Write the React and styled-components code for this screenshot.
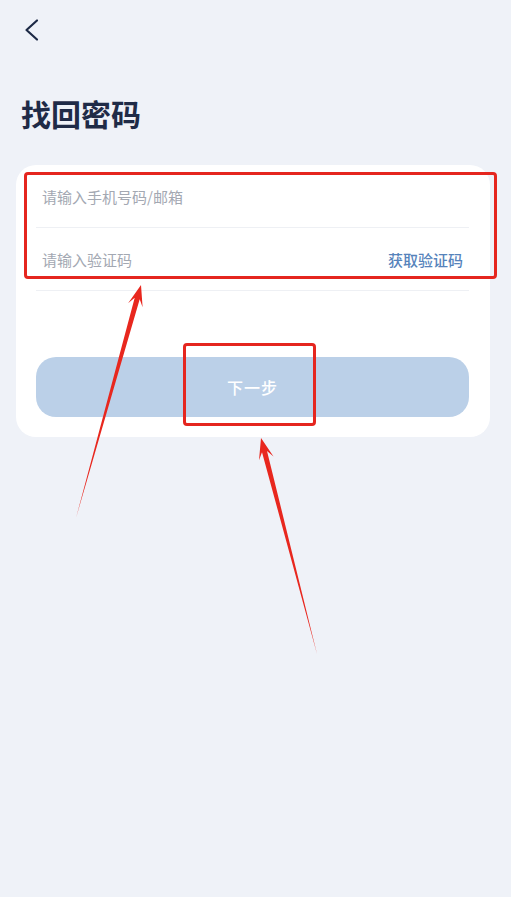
import React from "react";
import styled, { createGlobalStyle } from "styled-components";

const GlobalStyle = createGlobalStyle`
  html, body {
    margin: 0;
    padding: 0;
    background: #eff2f8;
  }
  * {
    box-sizing: border-box;
  }
`;

const Page = styled.div`
  position: relative;
  width: 511px;
  min-height: 897px;
  background: #eff2f8;
  font-family: "Noto Sans CJK SC", "Noto Sans", sans-serif;
  overflow: hidden;
`;

const TopBar = styled.div`
  height: 60px;
  display: flex;
  align-items: center;
  padding-left: 20px;
`;

const BackButton = styled.button`
  width: 24px;
  height: 24px;
  padding: 0;
  border: none;
  background: none;
  display: flex;
  align-items: center;
  justify-content: center;
  color: #1d2a46;
`;

const Title = styled.h1`
  margin: 32px 0 0 21px;
  font-size: 30px;
  line-height: 42px;
  font-weight: 700;
  color: #1f2b47;
`;

const Card = styled.div`
  margin: 31px 21px 0 16px;
  background: #fff;
  border-radius: 20px;
  padding: 0 21px 20px 20px;
`;

const FieldRow = styled.div`
  height: 63px;
  padding-top: 1px;
  display: flex;
  align-items: center;
  border-bottom: 1px solid #eef0f4;
`;

const Input = styled.input`
  flex: 1;
  min-width: 0;
  border: none;
  outline: none;
  background: transparent;
  padding: 0 0 0 6px;
  font-family: inherit;
  font-size: 15px;
  color: #1d2a46;

  &::placeholder {
    color: #a3a8b2;
  }
`;

const CodeLink = styled.span`
  margin-right: 6px;
  font-size: 15px;
  font-weight: 500;
  color: #5683bb;
`;

const SubmitButton = styled.button`
  display: block;
  width: 100%;
  height: 60px;
  margin-top: 66px;
  border: none;
  border-radius: 20px;
  background: #bbd0e8;
  color: #fff;
  font-family: inherit;
  font-size: 16px;
  font-weight: 500;
  letter-spacing: 1px;
`;

const Highlight = styled.div`
  position: absolute;
  left: ${(p) => p.$x}px;
  top: ${(p) => p.$y}px;
  width: ${(p) => p.$w}px;
  height: ${(p) => p.$h}px;
  border: 3px solid #e5261f;
  border-radius: 4px;
  pointer-events: none;
`;

const ArrowLayer = styled.svg`
  position: absolute;
  left: 0;
  top: 0;
  pointer-events: none;
`;

function arrowPoints([tx, ty], [hx, hy]) {
  const len = Math.hypot(hx - tx, hy - ty);
  const dx = (hx - tx) / len;
  const dy = (hy - ty) / len;
  const nx = -dy;
  const ny = dx;
  const at = (back, side) => [hx - dx * back + nx * side, hy - dy * back + ny * side];
  const pts = [
    [tx, ty],
    at(14, 2.6),
    at(21, 7.5),
    [hx, hy],
    at(21, -7.5),
    at(14, -2.6),
  ];
  return pts.map((p) => p.map((v) => v.toFixed(1)).join(",")).join(" ");
}

const arrows = [
  { tail: [76, 518], tip: [141, 285] },
  { tail: [317, 654], tip: [261, 438] },
];

export default function App() {
  return (
    <Page>
      <GlobalStyle />
      <TopBar>
        <BackButton aria-label="返回">
          <svg width="24" height="24" viewBox="0 0 24 24" fill="none">
            <path
              d="M17 2.5 L6.5 12 L17 21.5"
              stroke="currentColor"
              strokeWidth="2.2"
              strokeLinecap="round"
              strokeLinejoin="round"
            />
          </svg>
        </BackButton>
      </TopBar>

      <Title>找回密码</Title>

      <Card>
        <FieldRow>
          <Input placeholder="请输入手机号码/邮箱" />
        </FieldRow>
        <FieldRow>
          <Input placeholder="请输入验证码" />
          <CodeLink>获取验证码</CodeLink>
        </FieldRow>
        <SubmitButton>下一步</SubmitButton>
      </Card>

      <Highlight $x={24} $y={172} $w={473} $h={107} />
      <Highlight $x={183} $y={343} $w={133} $h={83} />

      <ArrowLayer width="511" height="897" viewBox="0 0 511 897">
        {arrows.map((a, i) => (
          <polygon key={i} points={arrowPoints(a.tail, a.tip)} fill="#e8271e" />
        ))}
      </ArrowLayer>
    </Page>
  );
}
